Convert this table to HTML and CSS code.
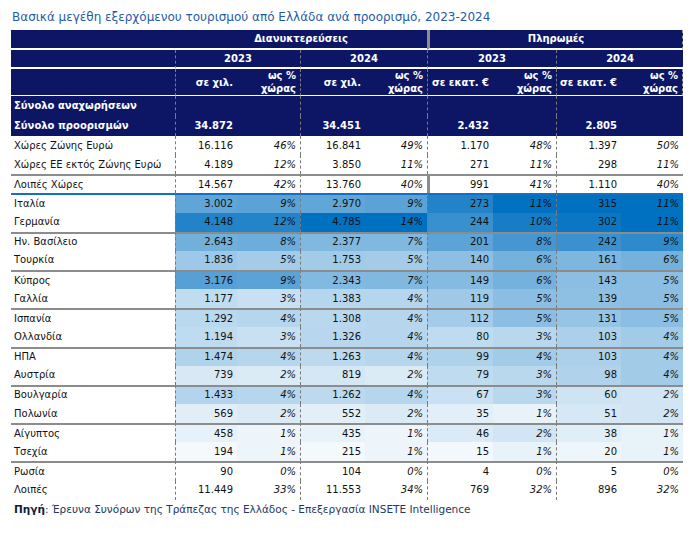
FILE: index.html
```html
<!DOCTYPE html>
<html lang="el">
<head>
<meta charset="utf-8">
<title>Εξερχόμενος τουρισμός</title>
<link rel="stylesheet" href="styles.css">
</head>
<body>
<div class="page">
  <h1 class="title">Βασικά μεγέθη εξερχόμενου τουρισμού από Ελλάδα ανά προορισμό, 2023-2024</h1>
  <table class="t">
    <colgroup>
      <col class="c-l"><col class="c-v1"><col class="c-p1"><col class="c-v2"><col class="c-p2"><col class="c-v3"><col class="c-p3"><col class="c-v4"><col class="c-p4">
    </colgroup>
    <thead>
      <tr class="h1">
        <th></th>
        <th colspan="4">Διανυκτερεύσεις</th>
        <th colspan="4" class="sep r">Πληρωμές</th>
      </tr>
      <tr class="h2">
        <th></th>
        <th colspan="2" class="d">2023</th>
        <th colspan="2" class="d">2024</th>
        <th colspan="2" class="d">2023</th>
        <th colspan="2" class="d">2024</th>
      </tr>
      <tr class="h3">
        <th></th>
        <th class="u d">σε χιλ.</th><th class="u">ως %<br>χώρας</th>
        <th class="u d">σε χιλ.</th><th class="u">ως %<br>χώρας</th>
        <th class="u d">σε εκατ. €</th><th class="u">ως %<br>χώρας</th>
        <th class="u d">σε εκατ. €</th><th class="u r">ως %<br>χώρας</th>
      </tr>
    </thead>
    <tbody class="tot">
      <tr>
        <td class="l">Σύνολο αναχωρήσεων</td>
        <td class="v d"></td><td class="p"></td><td class="v d"></td><td class="p"></td>
        <td class="v d"></td><td class="p"></td><td class="v d"></td><td class="p"></td>
      </tr>
      <tr>
        <td class="l">Σύνολο προορισμών</td>
        <td class="v d">34.872</td><td class="p"></td><td class="v d">34.451</td><td class="p"></td>
        <td class="v d">2.432</td><td class="p"></td><td class="v d">2.805</td><td class="p"></td>
      </tr>
    </tbody>
    <tbody class="body">
      <tr>
        <td class="l">Χώρες Ζώνης Ευρώ</td>
        <td class="v d">16.116</td><td class="p">46%</td><td class="v d">16.841</td><td class="p">49%</td>
        <td class="v d">1.170</td><td class="p">48%</td><td class="v d">1.397</td><td class="p">50%</td>
      </tr>
      <tr>
        <td class="l">Χώρες ΕΕ εκτός Ζώνης Ευρώ</td>
        <td class="v d">4.189</td><td class="p">12%</td><td class="v d">3.850</td><td class="p">11%</td>
        <td class="v d">271</td><td class="p">11%</td><td class="v d">298</td><td class="p">11%</td>
      </tr>
      <tr class="g">
        <td class="l">Λοιπές Χώρες</td>
        <td class="v d">14.567</td><td class="p">42%</td><td class="v d">13.760</td><td class="p">40%</td>
        <td class="v sep">991</td><td class="p">41%</td><td class="v d">1.110</td><td class="p">40%</td>
      </tr>
      <tr class="b hm">
        <td class="l">Ιταλία</td>
        <td class="v d">3.002</td><td class="p">9%</td><td class="v d">2.970</td><td class="p">9%</td>
        <td class="v d">273</td><td class="p">11%</td><td class="v d">315</td><td class="p">11%</td>
      </tr>
      <tr class="hm">
        <td class="l">Γερμανία</td>
        <td class="v d">4.148</td><td class="p">12%</td><td class="v d">4.785</td><td class="p">14%</td>
        <td class="v d">244</td><td class="p">10%</td><td class="v d">302</td><td class="p">11%</td>
      </tr>
      <tr class="g hm">
        <td class="l">Ην. Βασίλειο</td>
        <td class="v d">2.643</td><td class="p">8%</td><td class="v d">2.377</td><td class="p">7%</td>
        <td class="v d">201</td><td class="p">8%</td><td class="v d">242</td><td class="p">9%</td>
      </tr>
      <tr class="hm">
        <td class="l">Τουρκία</td>
        <td class="v d">1.836</td><td class="p">5%</td><td class="v d">1.753</td><td class="p">5%</td>
        <td class="v d">140</td><td class="p">6%</td><td class="v d">161</td><td class="p">6%</td>
      </tr>
      <tr class="g hm">
        <td class="l">Κύπρος</td>
        <td class="v d">3.176</td><td class="p">9%</td><td class="v d">2.343</td><td class="p">7%</td>
        <td class="v d">149</td><td class="p">6%</td><td class="v d">143</td><td class="p">5%</td>
      </tr>
      <tr class="hm">
        <td class="l">Γαλλία</td>
        <td class="v d">1.177</td><td class="p">3%</td><td class="v d">1.383</td><td class="p">4%</td>
        <td class="v d">119</td><td class="p">5%</td><td class="v d">139</td><td class="p">5%</td>
      </tr>
      <tr class="g hm">
        <td class="l">Ισπανία</td>
        <td class="v d">1.292</td><td class="p">4%</td><td class="v d">1.308</td><td class="p">4%</td>
        <td class="v d">112</td><td class="p">5%</td><td class="v d">131</td><td class="p">5%</td>
      </tr>
      <tr class="hm">
        <td class="l">Ολλανδία</td>
        <td class="v d">1.194</td><td class="p">3%</td><td class="v d">1.326</td><td class="p">4%</td>
        <td class="v d">80</td><td class="p">3%</td><td class="v d">103</td><td class="p">4%</td>
      </tr>
      <tr class="g hm">
        <td class="l">ΗΠΑ</td>
        <td class="v d">1.474</td><td class="p">4%</td><td class="v d">1.263</td><td class="p">4%</td>
        <td class="v d">99</td><td class="p">4%</td><td class="v d">103</td><td class="p">4%</td>
      </tr>
      <tr class="hm">
        <td class="l">Αυστρία</td>
        <td class="v d">739</td><td class="p">2%</td><td class="v d">819</td><td class="p">2%</td>
        <td class="v d">79</td><td class="p">3%</td><td class="v d">98</td><td class="p">4%</td>
      </tr>
      <tr class="g hm">
        <td class="l">Βουλγαρία</td>
        <td class="v d">1.433</td><td class="p">4%</td><td class="v d">1.262</td><td class="p">4%</td>
        <td class="v d">67</td><td class="p">3%</td><td class="v d">60</td><td class="p">2%</td>
      </tr>
      <tr class="hm">
        <td class="l">Πολωνία</td>
        <td class="v d">569</td><td class="p">2%</td><td class="v d">552</td><td class="p">2%</td>
        <td class="v d">35</td><td class="p">1%</td><td class="v d">51</td><td class="p">2%</td>
      </tr>
      <tr class="g hm">
        <td class="l">Αίγυπτος</td>
        <td class="v d">458</td><td class="p">1%</td><td class="v d">435</td><td class="p">1%</td>
        <td class="v d">46</td><td class="p">2%</td><td class="v d">38</td><td class="p">1%</td>
      </tr>
      <tr class="hm">
        <td class="l">Τσεχία</td>
        <td class="v d">194</td><td class="p">1%</td><td class="v d">215</td><td class="p">1%</td>
        <td class="v d">15</td><td class="p">1%</td><td class="v d">20</td><td class="p">1%</td>
      </tr>
      <tr class="g">
        <td class="l">Ρωσία</td>
        <td class="v d">90</td><td class="p">0%</td><td class="v d">104</td><td class="p">0%</td>
        <td class="v d">4</td><td class="p">0%</td><td class="v d">5</td><td class="p">0%</td>
      </tr>
      <tr>
        <td class="l">Λοιπές</td>
        <td class="v d">11.449</td><td class="p">33%</td><td class="v d">11.553</td><td class="p">34%</td>
        <td class="v d">769</td><td class="p">32%</td><td class="v d">896</td><td class="p">32%</td>
      </tr>
    </tbody>
  </table>
  <p class="src"><b>Πηγή</b>: Έρευνα Συνόρων της Τράπεζας της Ελλάδος - Επεξεργασία INSETE Intelligence</p>
</div>
<script src="script.js"></script>
</body>
</html>
```
FILE: styles.css
```css
* { box-sizing: border-box; }
body {
  margin: 0;
  background: #fff;
  font-family: "DejaVu Sans", Verdana, sans-serif;
  color: #111;
}
.page { padding-left: 11px; }
.title {
  margin: 0;
  height: 30px;
  padding: 10px 0 0 1px;
  font-size: 12px;
  line-height: 15px;
  font-weight: normal;
  color: #1f5ca6;
  white-space: nowrap;
}
.t {
  width: 672px;
  table-layout: fixed;
  border-collapse: separate;
  border-spacing: 0;
  font-size: 10px;
}
.c-l { width: 164px; }
.c-v1 { width: 62px; } .c-p1 { width: 63px; }
.c-v2 { width: 65px; } .c-p2 { width: 62px; }
.c-v3 { width: 66px; } .c-p3 { width: 63px; }
.c-v4 { width: 65px; } .c-p4 { width: 62px; }

thead th {
  background: #0c1665;
  color: #fff;
  font-weight: bold;
  padding: 0;
  line-height: 12px;
  text-align: center;
  white-space: nowrap;
}
.h1 th { height: 20px; border-bottom: 2px solid #fff; }
.h2 th { height: 19px; border-bottom: 2px solid #fff; }
.h3 th { height: 27px; border-bottom: 1px solid #fff; line-height: 13px; }
.h3 th.u { text-align: right; padding-right: 4px; }
th.d, td.d { border-left: 1px dashed #7a7a7a; }
th.sep, td.sep { border-left: 3px solid #8c8c8c; }
th.r { border-right: 1px dashed #9a9a9a; }

td {
  padding: 0 4px 0 0;
  line-height: 12px;
  white-space: nowrap;
}
td.l { padding-left: 3px; text-align: left; }
td.v { text-align: right; }
td.p { text-align: right; font-style: italic; }

.tot td {
  background: #0c1665;
  color: #fff;
  font-weight: bold;
  height: 20px;
}
.body td { height: 19.15px; }
.body tr.g td { border-top: 2px solid #8c8c8c; }
.body tr.b td { border-top: 2px solid #1470c2; }

.src {
  margin: 3px 0 0;
  padding-left: 3px;
  font-size: 10.5px;
  line-height: 12px;
  color: #23385e;
  white-space: nowrap;
}
.src b { color: #0f1c3a; }
```
FILE: script.js
```js
(function () {
  var max = [0, 4785, 14, 4785, 14, 315, 11, 315, 11];
  var rows = document.querySelectorAll('tr.hm');
  rows.forEach(function (tr) {
    var cells = tr.children;
    for (var i = 1; i < cells.length; i++) {
      var v = parseFloat(cells[i].textContent.replace(/\./g, '').replace('%', ''));
      var t = Math.min(1, v / max[i]);
      var r = Math.round(255 - 255 * t);
      var g = Math.round(255 - 143 * t);
      var b = Math.round(255 - 63 * t);
      cells[i].style.background = 'rgb(' + r + ',' + g + ',' + b + ')';
    }
  });
})();
```
